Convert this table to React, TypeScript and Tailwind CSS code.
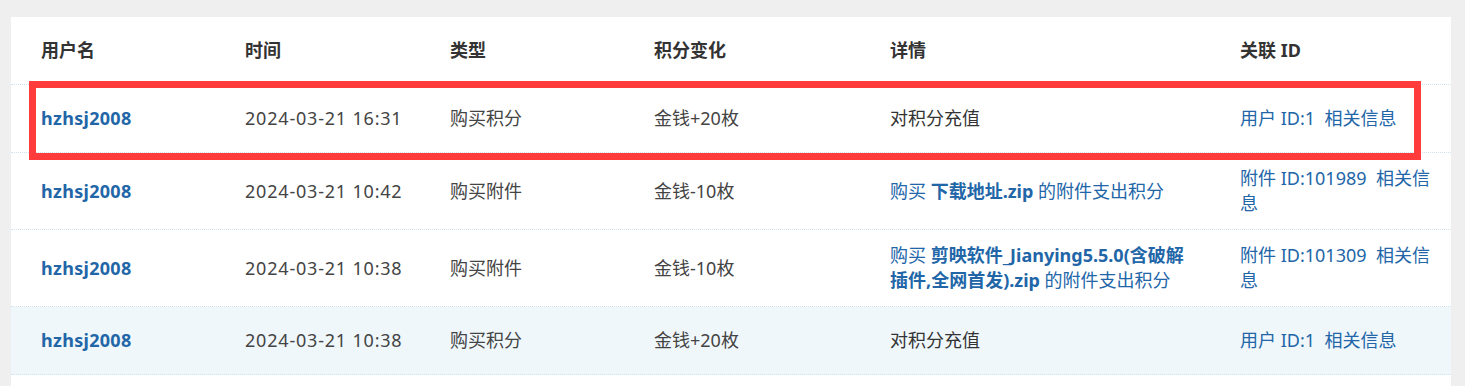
import React from 'react';

interface LogRow {
  user: string;
  time: string;
  type: string;
  change: string;
  detail: React.ReactNode;
  relKind: string;
  relId: string;
  highlight?: boolean;
}

const rows: LogRow[] = [
  {
    user: 'hzhsj2008',
    time: '2024-03-21 16:31',
    type: '购买积分',
    change: '金钱+20枚',
    detail: <span className="text-[#333]">对积分充值</span>,
    relKind: '用户',
    relId: '1',
  },
  {
    user: 'hzhsj2008',
    time: '2024-03-21 10:42',
    type: '购买附件',
    change: '金钱-10枚',
    detail: (
      <span className="text-[#2266a8]">
        购买 <b className="font-bold">下载地址.zip</b> 的附件支出积分
      </span>
    ),
    relKind: '附件',
    relId: '101989',
  },
  {
    user: 'hzhsj2008',
    time: '2024-03-21 10:38',
    type: '购买附件',
    change: '金钱-10枚',
    detail: (
      <span className="text-[#2266a8]">
        购买 <b className="font-bold">剪映软件_Jianying5.5.0(含破解插件,全网首发).zip</b> 的附件支出积分
      </span>
    ),
    relKind: '附件',
    relId: '101309',
  },
  {
    user: 'hzhsj2008',
    time: '2024-03-21 10:38',
    type: '购买积分',
    change: '金钱+20枚',
    detail: <span className="text-[#333]">对积分充值</span>,
    relKind: '用户',
    relId: '1',
    highlight: true,
  },
];

const cols = 'grid grid-cols-[219px_205px_204px_236px_350px_1fr]';
const cell = 'flex items-center px-[15px] py-[13px]';

export default function App() {
  return (
    <div
      className="min-h-[386px] bg-[#efefef] pt-[17px] pl-[11px] pr-[14px] text-[18px] leading-[25px] text-[#333]"
      style={{ fontFamily: '"Noto Sans", "Noto Sans CJK SC", sans-serif' }}
    >
      <div className="relative min-h-[369px] bg-white">
        <div className={`${cols} min-h-[68px] border-b border-dotted border-[#cfe2f0] font-bold text-[#333]`}>
          <div className={`${cell} pl-[30px]`}>用户名</div>
          <div className={cell}>时间</div>
          <div className={cell}>类型</div>
          <div className={cell}>积分变化</div>
          <div className={cell}>详情</div>
          <div className={cell}>关联 ID</div>
        </div>

        {rows.map((r, i) => (
          <div
            key={i}
            className={`${cols} min-h-[68px] border-b border-dotted border-[#cfe2f0] ${
              r.highlight ? 'bg-[#f0f7fb]' : ''
            }`}
          >
            <div className={`${cell} pl-[30px] font-bold tracking-[0.3px] text-[#2266a8]`}>{r.user}</div>
            <div className={`${cell} tracking-[0.8px] text-[#444]`}>{r.time}</div>
            <div className={`${cell} text-[#444]`}>{r.type}</div>
            <div className={`${cell} text-[#444]`}>{r.change}</div>
            <div className={`${cell} pr-[30px]`}>
              <div>{r.detail}</div>
            </div>
            <div className={`${cell} pr-[10px] text-[#2266a8]`}>
              <div>
                {r.relKind} ID:{r.relId}&nbsp;&nbsp;相关信息
              </div>
            </div>
          </div>
        ))}

        {/* annotation box over the first row */}
        <div className="pointer-events-none absolute left-[18px] top-[64px] h-[79px] w-[1392px] border-[7px] border-[#ff3b3b]" />
      </div>
    </div>
  );
}
